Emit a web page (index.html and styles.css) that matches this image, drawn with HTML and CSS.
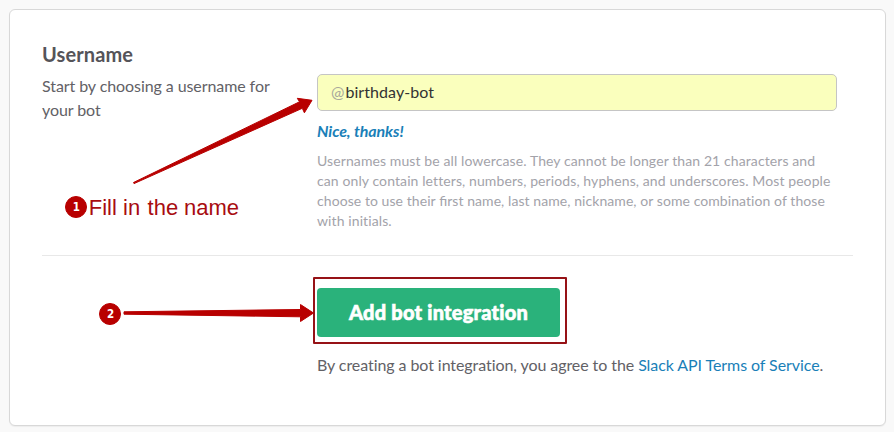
FILE: index.html
```
<!DOCTYPE html>
<html lang="en">
<head>
<meta charset="utf-8">
<title>Add bot integration</title>
<link rel="stylesheet" href="styles.css">
</head>
<body>
<main class="card">
  <section class="row">
    <div class="intro">
      <h2>Username</h2>
      <p>Start by choosing a username for<br>your bot</p>
    </div>
    <div class="field">
      <div class="input"><span class="at">@</span><span class="value">birthday-bot</span></div>
      <p class="ok">Nice, thanks!</p>
      <p class="hint">Usernames must be all lowercase. They cannot be longer than 21 characters and<br>can only contain letters, numbers, periods, hyphens, and underscores. Most people<br><span class="tight">choose to use their <span class="liga">fi</span>rst name, last name, nickname, or some combination of those</span><br>with initials.</p>
    </div>
  </section>
  <section class="submit">
    <button class="btn" type="button">Add bot integration</button>
    <p class="terms">By creating a bot integration, you agree to the <a href="#">Slack API Terms of Service</a>.</p>
  </section>
</main>
<svg class="notes" width="894" height="432" viewBox="0 0 894 432">
  <rect x="314" y="278" width="252" height="65" fill="none" stroke="#961216" stroke-width="2" stroke-linejoin="round"/>
  <g fill="#b80000" stroke="#b80000" stroke-linejoin="round">
    <path d="M133.5 182.5L299.5 101.8L297.3 98.3L312 100.3L304.4 112.8L302.3 108.3L134 183.6Z"/>
    <path d="M124 311.8L300.5 309.5V304.5L313.5 313L300.5 321.5V316.8L124 314.2Z"/>
    <circle cx="76" cy="207" r="10.5"/>
    <circle cx="110" cy="314" r="10.5"/>
  </g>
  <text class="num" x="76.3" y="211">1</text>
  <text class="num" x="110.5" y="318">2</text>
  <text class="label" y="215"><tspan x="88.8">Fill </tspan><tspan x="123">in </tspan><tspan x="147.6">the </tspan><tspan x="184">name</tspan></text>
</svg>
</body>
</html>
```
FILE: styles.css
```
* { box-sizing: border-box; }
body { margin: 0; padding: 9px; width: 894px; height: 432px; overflow: hidden; background: #f9f9f9; font-family: Lato, sans-serif; color: #626166; }
h2, p { margin: 0; }
.card { width: 877px; height: 417px; padding: 32px; background: #fff; border: 1px solid #d8d8d8; border-radius: 6px; box-shadow: 0 1px 1px rgba(0, 0, 0, .05); }
.row { display: flex; height: 214px; border-bottom: 1px solid #e8e8e8; }
.intro { width: 275px; }
h2 { margin-top: -1px; color: #555459; font-size: 20px; line-height: 26px; font-weight: 700; letter-spacing: .12px; }
.intro p { margin-top: 7px; font-size: 16px; line-height: 24px; letter-spacing: -.08px; }
.field { width: 520px; padding-top: 32px; }
.input { height: 37px; padding: 0 13px; border: 1px solid #c5c5c5; border-radius: 5px; background: #faffbd; font-size: 16px; line-height: 34px; }
.at { color: #a8a89c; margin-right: 1px; }
.value { color: #333; letter-spacing: .08px; }
.ok { margin-top: 10px; color: #1a7fb8; font-size: 16px; line-height: 20px; font-weight: 700; font-style: italic; letter-spacing: -.08px; }
.hint { margin-top: 10px; color: #a3a3aa; font-size: 14px; line-height: 20px; letter-spacing: .1px; white-space: nowrap; }
.tight { letter-spacing: .07px; }
.liga { letter-spacing: 0; }
.submit { padding: 32px 0 0 275px; }
.btn { display: block; width: 243px; height: 49px; padding: 0 0 2px; border: 0; border-radius: 4px; background: #2ab27b; color: #fff; font: 900 20px/46px "Lato Black", Lato, sans-serif; letter-spacing: .22px; -webkit-text-stroke: .6px #fff; }
.terms { margin-top: 16px; font-size: 16px; line-height: 24px; letter-spacing: -.075px; white-space: nowrap; }
.terms a { color: #1a7fb8; text-decoration: none; }
.notes { position: absolute; left: 0; top: 0; pointer-events: none; }
.num { fill: #fff; font: 700 11.5px "DejaVu Sans Condensed", "DejaVu Sans", sans-serif; text-anchor: middle; }
.label { fill: #a80c10; font: 22px "Liberation Sans", sans-serif; }
```
